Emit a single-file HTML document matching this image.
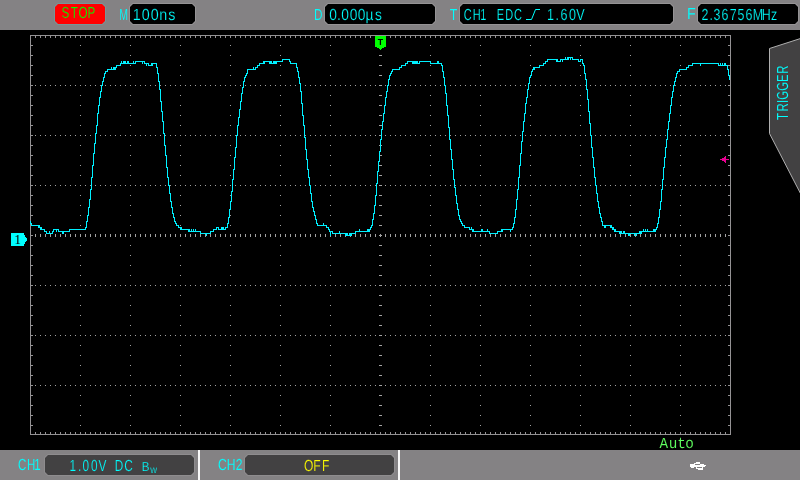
<!DOCTYPE html>
<html lang="en"><head><meta charset="utf-8"><title>Oscilloscope</title>
<style>html,body{margin:0;padding:0;background:#000;width:800px;height:480px;overflow:hidden}svg{display:block;position:absolute;left:0;top:0;will-change:transform}text{font-family:"Liberation Sans",sans-serif;white-space:pre;text-rendering:geometricPrecision}</style></head><body>
<svg width="800" height="480" viewBox="0 0 800 480">
<rect width="800" height="480" fill="#000"/>
<rect x="0" y="0" width="800" height="30" fill="#848284"/>
<rect x="0" y="450" width="800" height="30" fill="#848284"/>
<path fill="#ff0000" stroke="#7a9496" stroke-width="2" paint-order="stroke" d="M58 4H102L105 7V21L102 24H58L55 21V7z"/>
<path fill="#000" stroke="#959395" stroke-width="2" paint-order="stroke" d="M133 4H192L195 7V21L192 24H133L130 21V7z"/>
<path fill="#000" stroke="#959395" stroke-width="2" paint-order="stroke" d="M328 4H432L435 7V21L432 24H328L325 21V7z"/>
<path fill="#000" stroke="#959395" stroke-width="2" paint-order="stroke" d="M463 4H670L673 7V21L670 24H463L460 21V7z"/>
<path fill="#000" stroke="#959395" stroke-width="2" paint-order="stroke" d="M701 4H795L798 7V21L795 24H701L698 21V7z"/>
<path fill="#424142" stroke="#8e8c8e" stroke-width="2" paint-order="stroke" d="M48 455H191L194 458V472L191 475H48L45 472V458z"/>
<path fill="#424142" stroke="#8e8c8e" stroke-width="2" paint-order="stroke" d="M248 455H391L394 458V472L391 475H248L245 472V458z"/>
<rect x="198" y="450" width="2" height="30" fill="#f8f8f8"/><rect x="398" y="450" width="2" height="30" fill="#f8f8f8"/>
<g shape-rendering="crispEdges">
<path fill="#949294" d="M30 35h701v1h-701zM30 434h701v1h-701zM30 35h1v400h-1zM730 35h1v400h-1z"/>
<path fill="#949294" d="M35 36h1v2h-1zM35 432h1v2h-1zM40 36h1v2h-1zM40 432h1v2h-1zM45 36h1v2h-1zM45 432h1v2h-1zM50 36h1v2h-1zM50 432h1v2h-1zM55 36h1v2h-1zM55 432h1v2h-1zM60 36h1v2h-1zM60 432h1v2h-1zM65 36h1v2h-1zM65 432h1v2h-1zM70 36h1v2h-1zM70 432h1v2h-1zM75 36h1v2h-1zM75 432h1v2h-1zM80 36h1v2h-1zM80 432h1v2h-1zM85 36h1v2h-1zM85 432h1v2h-1zM90 36h1v2h-1zM90 432h1v2h-1zM95 36h1v2h-1zM95 432h1v2h-1zM100 36h1v2h-1zM100 432h1v2h-1zM105 36h1v2h-1zM105 432h1v2h-1zM110 36h1v2h-1zM110 432h1v2h-1zM115 36h1v2h-1zM115 432h1v2h-1zM120 36h1v2h-1zM120 432h1v2h-1zM125 36h1v2h-1zM125 432h1v2h-1zM130 36h1v2h-1zM130 432h1v2h-1zM135 36h1v2h-1zM135 432h1v2h-1zM140 36h1v2h-1zM140 432h1v2h-1zM145 36h1v2h-1zM145 432h1v2h-1zM150 36h1v2h-1zM150 432h1v2h-1zM155 36h1v2h-1zM155 432h1v2h-1zM160 36h1v2h-1zM160 432h1v2h-1zM165 36h1v2h-1zM165 432h1v2h-1zM170 36h1v2h-1zM170 432h1v2h-1zM175 36h1v2h-1zM175 432h1v2h-1zM180 36h1v2h-1zM180 432h1v2h-1zM185 36h1v2h-1zM185 432h1v2h-1zM190 36h1v2h-1zM190 432h1v2h-1zM195 36h1v2h-1zM195 432h1v2h-1zM200 36h1v2h-1zM200 432h1v2h-1zM205 36h1v2h-1zM205 432h1v2h-1zM210 36h1v2h-1zM210 432h1v2h-1zM215 36h1v2h-1zM215 432h1v2h-1zM220 36h1v2h-1zM220 432h1v2h-1zM225 36h1v2h-1zM225 432h1v2h-1zM230 36h1v2h-1zM230 432h1v2h-1zM235 36h1v2h-1zM235 432h1v2h-1zM240 36h1v2h-1zM240 432h1v2h-1zM245 36h1v2h-1zM245 432h1v2h-1zM250 36h1v2h-1zM250 432h1v2h-1zM255 36h1v2h-1zM255 432h1v2h-1zM260 36h1v2h-1zM260 432h1v2h-1zM265 36h1v2h-1zM265 432h1v2h-1zM270 36h1v2h-1zM270 432h1v2h-1zM275 36h1v2h-1zM275 432h1v2h-1zM280 36h1v2h-1zM280 432h1v2h-1zM285 36h1v2h-1zM285 432h1v2h-1zM290 36h1v2h-1zM290 432h1v2h-1zM295 36h1v2h-1zM295 432h1v2h-1zM300 36h1v2h-1zM300 432h1v2h-1zM305 36h1v2h-1zM305 432h1v2h-1zM310 36h1v2h-1zM310 432h1v2h-1zM315 36h1v2h-1zM315 432h1v2h-1zM320 36h1v2h-1zM320 432h1v2h-1zM325 36h1v2h-1zM325 432h1v2h-1zM330 36h1v2h-1zM330 432h1v2h-1zM335 36h1v2h-1zM335 432h1v2h-1zM340 36h1v2h-1zM340 432h1v2h-1zM345 36h1v2h-1zM345 432h1v2h-1zM350 36h1v2h-1zM350 432h1v2h-1zM355 36h1v2h-1zM355 432h1v2h-1zM360 36h1v2h-1zM360 432h1v2h-1zM365 36h1v2h-1zM365 432h1v2h-1zM370 36h1v2h-1zM370 432h1v2h-1zM375 36h1v2h-1zM375 432h1v2h-1zM380 36h1v2h-1zM380 432h1v2h-1zM385 36h1v2h-1zM385 432h1v2h-1zM390 36h1v2h-1zM390 432h1v2h-1zM395 36h1v2h-1zM395 432h1v2h-1zM400 36h1v2h-1zM400 432h1v2h-1zM405 36h1v2h-1zM405 432h1v2h-1zM410 36h1v2h-1zM410 432h1v2h-1zM415 36h1v2h-1zM415 432h1v2h-1zM420 36h1v2h-1zM420 432h1v2h-1zM425 36h1v2h-1zM425 432h1v2h-1zM430 36h1v2h-1zM430 432h1v2h-1zM435 36h1v2h-1zM435 432h1v2h-1zM440 36h1v2h-1zM440 432h1v2h-1zM445 36h1v2h-1zM445 432h1v2h-1zM450 36h1v2h-1zM450 432h1v2h-1zM455 36h1v2h-1zM455 432h1v2h-1zM460 36h1v2h-1zM460 432h1v2h-1zM465 36h1v2h-1zM465 432h1v2h-1zM470 36h1v2h-1zM470 432h1v2h-1zM475 36h1v2h-1zM475 432h1v2h-1zM480 36h1v2h-1zM480 432h1v2h-1zM485 36h1v2h-1zM485 432h1v2h-1zM490 36h1v2h-1zM490 432h1v2h-1zM495 36h1v2h-1zM495 432h1v2h-1zM500 36h1v2h-1zM500 432h1v2h-1zM505 36h1v2h-1zM505 432h1v2h-1zM510 36h1v2h-1zM510 432h1v2h-1zM515 36h1v2h-1zM515 432h1v2h-1zM520 36h1v2h-1zM520 432h1v2h-1zM525 36h1v2h-1zM525 432h1v2h-1zM530 36h1v2h-1zM530 432h1v2h-1zM535 36h1v2h-1zM535 432h1v2h-1zM540 36h1v2h-1zM540 432h1v2h-1zM545 36h1v2h-1zM545 432h1v2h-1zM550 36h1v2h-1zM550 432h1v2h-1zM555 36h1v2h-1zM555 432h1v2h-1zM560 36h1v2h-1zM560 432h1v2h-1zM565 36h1v2h-1zM565 432h1v2h-1zM570 36h1v2h-1zM570 432h1v2h-1zM575 36h1v2h-1zM575 432h1v2h-1zM580 36h1v2h-1zM580 432h1v2h-1zM585 36h1v2h-1zM585 432h1v2h-1zM590 36h1v2h-1zM590 432h1v2h-1zM595 36h1v2h-1zM595 432h1v2h-1zM600 36h1v2h-1zM600 432h1v2h-1zM605 36h1v2h-1zM605 432h1v2h-1zM610 36h1v2h-1zM610 432h1v2h-1zM615 36h1v2h-1zM615 432h1v2h-1zM620 36h1v2h-1zM620 432h1v2h-1zM625 36h1v2h-1zM625 432h1v2h-1zM630 36h1v2h-1zM630 432h1v2h-1zM635 36h1v2h-1zM635 432h1v2h-1zM640 36h1v2h-1zM640 432h1v2h-1zM645 36h1v2h-1zM645 432h1v2h-1zM650 36h1v2h-1zM650 432h1v2h-1zM655 36h1v2h-1zM655 432h1v2h-1zM660 36h1v2h-1zM660 432h1v2h-1zM665 36h1v2h-1zM665 432h1v2h-1zM670 36h1v2h-1zM670 432h1v2h-1zM675 36h1v2h-1zM675 432h1v2h-1zM680 36h1v2h-1zM680 432h1v2h-1zM685 36h1v2h-1zM685 432h1v2h-1zM690 36h1v2h-1zM690 432h1v2h-1zM695 36h1v2h-1zM695 432h1v2h-1zM700 36h1v2h-1zM700 432h1v2h-1zM705 36h1v2h-1zM705 432h1v2h-1zM710 36h1v2h-1zM710 432h1v2h-1zM715 36h1v2h-1zM715 432h1v2h-1zM720 36h1v2h-1zM720 432h1v2h-1zM725 36h1v2h-1zM725 432h1v2h-1zM31 45h2v1h-2zM728 45h2v1h-2zM31 55h2v1h-2zM728 55h2v1h-2zM31 65h2v1h-2zM728 65h2v1h-2zM31 75h2v1h-2zM728 75h2v1h-2zM31 85h2v1h-2zM728 85h2v1h-2zM31 95h2v1h-2zM728 95h2v1h-2zM31 105h2v1h-2zM728 105h2v1h-2zM31 115h2v1h-2zM728 115h2v1h-2zM31 125h2v1h-2zM728 125h2v1h-2zM31 135h2v1h-2zM728 135h2v1h-2zM31 145h2v1h-2zM728 145h2v1h-2zM31 155h2v1h-2zM728 155h2v1h-2zM31 165h2v1h-2zM728 165h2v1h-2zM31 175h2v1h-2zM728 175h2v1h-2zM31 185h2v1h-2zM728 185h2v1h-2zM31 195h2v1h-2zM728 195h2v1h-2zM31 205h2v1h-2zM728 205h2v1h-2zM31 215h2v1h-2zM728 215h2v1h-2zM31 225h2v1h-2zM728 225h2v1h-2zM31 235h2v1h-2zM728 235h2v1h-2zM31 245h2v1h-2zM728 245h2v1h-2zM31 255h2v1h-2zM728 255h2v1h-2zM31 265h2v1h-2zM728 265h2v1h-2zM31 275h2v1h-2zM728 275h2v1h-2zM31 285h2v1h-2zM728 285h2v1h-2zM31 295h2v1h-2zM728 295h2v1h-2zM31 305h2v1h-2zM728 305h2v1h-2zM31 315h2v1h-2zM728 315h2v1h-2zM31 325h2v1h-2zM728 325h2v1h-2zM31 335h2v1h-2zM728 335h2v1h-2zM31 345h2v1h-2zM728 345h2v1h-2zM31 355h2v1h-2zM728 355h2v1h-2zM31 365h2v1h-2zM728 365h2v1h-2zM31 375h2v1h-2zM728 375h2v1h-2zM31 385h2v1h-2zM728 385h2v1h-2zM31 395h2v1h-2zM728 395h2v1h-2zM31 405h2v1h-2zM728 405h2v1h-2zM31 415h2v1h-2zM728 415h2v1h-2zM31 425h2v1h-2zM728 425h2v1h-2z"/>
<path fill="#a0a0a0" d="M35 85h1v1h-1zM40 85h1v1h-1zM45 85h1v1h-1zM50 85h1v1h-1zM55 85h1v1h-1zM60 85h1v1h-1zM65 85h1v1h-1zM70 85h1v1h-1zM75 85h1v1h-1zM80 85h1v1h-1zM85 85h1v1h-1zM90 85h1v1h-1zM95 85h1v1h-1zM100 85h1v1h-1zM105 85h1v1h-1zM110 85h1v1h-1zM115 85h1v1h-1zM120 85h1v1h-1zM125 85h1v1h-1zM130 85h1v1h-1zM135 85h1v1h-1zM140 85h1v1h-1zM145 85h1v1h-1zM150 85h1v1h-1zM155 85h1v1h-1zM160 85h1v1h-1zM165 85h1v1h-1zM170 85h1v1h-1zM175 85h1v1h-1zM180 85h1v1h-1zM185 85h1v1h-1zM190 85h1v1h-1zM195 85h1v1h-1zM200 85h1v1h-1zM205 85h1v1h-1zM210 85h1v1h-1zM215 85h1v1h-1zM220 85h1v1h-1zM225 85h1v1h-1zM230 85h1v1h-1zM235 85h1v1h-1zM240 85h1v1h-1zM245 85h1v1h-1zM250 85h1v1h-1zM255 85h1v1h-1zM260 85h1v1h-1zM265 85h1v1h-1zM270 85h1v1h-1zM275 85h1v1h-1zM280 85h1v1h-1zM285 85h1v1h-1zM290 85h1v1h-1zM295 85h1v1h-1zM300 85h1v1h-1zM305 85h1v1h-1zM310 85h1v1h-1zM315 85h1v1h-1zM320 85h1v1h-1zM325 85h1v1h-1zM330 85h1v1h-1zM335 85h1v1h-1zM340 85h1v1h-1zM345 85h1v1h-1zM350 85h1v1h-1zM355 85h1v1h-1zM360 85h1v1h-1zM365 85h1v1h-1zM370 85h1v1h-1zM375 85h1v1h-1zM380 85h1v1h-1zM385 85h1v1h-1zM390 85h1v1h-1zM395 85h1v1h-1zM400 85h1v1h-1zM405 85h1v1h-1zM410 85h1v1h-1zM415 85h1v1h-1zM420 85h1v1h-1zM425 85h1v1h-1zM430 85h1v1h-1zM435 85h1v1h-1zM440 85h1v1h-1zM445 85h1v1h-1zM450 85h1v1h-1zM455 85h1v1h-1zM460 85h1v1h-1zM465 85h1v1h-1zM470 85h1v1h-1zM475 85h1v1h-1zM480 85h1v1h-1zM485 85h1v1h-1zM490 85h1v1h-1zM495 85h1v1h-1zM500 85h1v1h-1zM505 85h1v1h-1zM510 85h1v1h-1zM515 85h1v1h-1zM520 85h1v1h-1zM525 85h1v1h-1zM530 85h1v1h-1zM535 85h1v1h-1zM540 85h1v1h-1zM545 85h1v1h-1zM550 85h1v1h-1zM555 85h1v1h-1zM560 85h1v1h-1zM565 85h1v1h-1zM570 85h1v1h-1zM575 85h1v1h-1zM580 85h1v1h-1zM585 85h1v1h-1zM590 85h1v1h-1zM595 85h1v1h-1zM600 85h1v1h-1zM605 85h1v1h-1zM610 85h1v1h-1zM615 85h1v1h-1zM620 85h1v1h-1zM625 85h1v1h-1zM630 85h1v1h-1zM635 85h1v1h-1zM640 85h1v1h-1zM645 85h1v1h-1zM650 85h1v1h-1zM655 85h1v1h-1zM660 85h1v1h-1zM665 85h1v1h-1zM670 85h1v1h-1zM675 85h1v1h-1zM680 85h1v1h-1zM685 85h1v1h-1zM690 85h1v1h-1zM695 85h1v1h-1zM700 85h1v1h-1zM705 85h1v1h-1zM710 85h1v1h-1zM715 85h1v1h-1zM720 85h1v1h-1zM725 85h1v1h-1zM35 135h1v1h-1zM40 135h1v1h-1zM45 135h1v1h-1zM50 135h1v1h-1zM55 135h1v1h-1zM60 135h1v1h-1zM65 135h1v1h-1zM70 135h1v1h-1zM75 135h1v1h-1zM80 135h1v1h-1zM85 135h1v1h-1zM90 135h1v1h-1zM95 135h1v1h-1zM100 135h1v1h-1zM105 135h1v1h-1zM110 135h1v1h-1zM115 135h1v1h-1zM120 135h1v1h-1zM125 135h1v1h-1zM130 135h1v1h-1zM135 135h1v1h-1zM140 135h1v1h-1zM145 135h1v1h-1zM150 135h1v1h-1zM155 135h1v1h-1zM160 135h1v1h-1zM165 135h1v1h-1zM170 135h1v1h-1zM175 135h1v1h-1zM180 135h1v1h-1zM185 135h1v1h-1zM190 135h1v1h-1zM195 135h1v1h-1zM200 135h1v1h-1zM205 135h1v1h-1zM210 135h1v1h-1zM215 135h1v1h-1zM220 135h1v1h-1zM225 135h1v1h-1zM230 135h1v1h-1zM235 135h1v1h-1zM240 135h1v1h-1zM245 135h1v1h-1zM250 135h1v1h-1zM255 135h1v1h-1zM260 135h1v1h-1zM265 135h1v1h-1zM270 135h1v1h-1zM275 135h1v1h-1zM280 135h1v1h-1zM285 135h1v1h-1zM290 135h1v1h-1zM295 135h1v1h-1zM300 135h1v1h-1zM305 135h1v1h-1zM310 135h1v1h-1zM315 135h1v1h-1zM320 135h1v1h-1zM325 135h1v1h-1zM330 135h1v1h-1zM335 135h1v1h-1zM340 135h1v1h-1zM345 135h1v1h-1zM350 135h1v1h-1zM355 135h1v1h-1zM360 135h1v1h-1zM365 135h1v1h-1zM370 135h1v1h-1zM375 135h1v1h-1zM380 135h1v1h-1zM385 135h1v1h-1zM390 135h1v1h-1zM395 135h1v1h-1zM400 135h1v1h-1zM405 135h1v1h-1zM410 135h1v1h-1zM415 135h1v1h-1zM420 135h1v1h-1zM425 135h1v1h-1zM430 135h1v1h-1zM435 135h1v1h-1zM440 135h1v1h-1zM445 135h1v1h-1zM450 135h1v1h-1zM455 135h1v1h-1zM460 135h1v1h-1zM465 135h1v1h-1zM470 135h1v1h-1zM475 135h1v1h-1zM480 135h1v1h-1zM485 135h1v1h-1zM490 135h1v1h-1zM495 135h1v1h-1zM500 135h1v1h-1zM505 135h1v1h-1zM510 135h1v1h-1zM515 135h1v1h-1zM520 135h1v1h-1zM525 135h1v1h-1zM530 135h1v1h-1zM535 135h1v1h-1zM540 135h1v1h-1zM545 135h1v1h-1zM550 135h1v1h-1zM555 135h1v1h-1zM560 135h1v1h-1zM565 135h1v1h-1zM570 135h1v1h-1zM575 135h1v1h-1zM580 135h1v1h-1zM585 135h1v1h-1zM590 135h1v1h-1zM595 135h1v1h-1zM600 135h1v1h-1zM605 135h1v1h-1zM610 135h1v1h-1zM615 135h1v1h-1zM620 135h1v1h-1zM625 135h1v1h-1zM630 135h1v1h-1zM635 135h1v1h-1zM640 135h1v1h-1zM645 135h1v1h-1zM650 135h1v1h-1zM655 135h1v1h-1zM660 135h1v1h-1zM665 135h1v1h-1zM670 135h1v1h-1zM675 135h1v1h-1zM680 135h1v1h-1zM685 135h1v1h-1zM690 135h1v1h-1zM695 135h1v1h-1zM700 135h1v1h-1zM705 135h1v1h-1zM710 135h1v1h-1zM715 135h1v1h-1zM720 135h1v1h-1zM725 135h1v1h-1zM35 185h1v1h-1zM40 185h1v1h-1zM45 185h1v1h-1zM50 185h1v1h-1zM55 185h1v1h-1zM60 185h1v1h-1zM65 185h1v1h-1zM70 185h1v1h-1zM75 185h1v1h-1zM80 185h1v1h-1zM85 185h1v1h-1zM90 185h1v1h-1zM95 185h1v1h-1zM100 185h1v1h-1zM105 185h1v1h-1zM110 185h1v1h-1zM115 185h1v1h-1zM120 185h1v1h-1zM125 185h1v1h-1zM130 185h1v1h-1zM135 185h1v1h-1zM140 185h1v1h-1zM145 185h1v1h-1zM150 185h1v1h-1zM155 185h1v1h-1zM160 185h1v1h-1zM165 185h1v1h-1zM170 185h1v1h-1zM175 185h1v1h-1zM180 185h1v1h-1zM185 185h1v1h-1zM190 185h1v1h-1zM195 185h1v1h-1zM200 185h1v1h-1zM205 185h1v1h-1zM210 185h1v1h-1zM215 185h1v1h-1zM220 185h1v1h-1zM225 185h1v1h-1zM230 185h1v1h-1zM235 185h1v1h-1zM240 185h1v1h-1zM245 185h1v1h-1zM250 185h1v1h-1zM255 185h1v1h-1zM260 185h1v1h-1zM265 185h1v1h-1zM270 185h1v1h-1zM275 185h1v1h-1zM280 185h1v1h-1zM285 185h1v1h-1zM290 185h1v1h-1zM295 185h1v1h-1zM300 185h1v1h-1zM305 185h1v1h-1zM310 185h1v1h-1zM315 185h1v1h-1zM320 185h1v1h-1zM325 185h1v1h-1zM330 185h1v1h-1zM335 185h1v1h-1zM340 185h1v1h-1zM345 185h1v1h-1zM350 185h1v1h-1zM355 185h1v1h-1zM360 185h1v1h-1zM365 185h1v1h-1zM370 185h1v1h-1zM375 185h1v1h-1zM380 185h1v1h-1zM385 185h1v1h-1zM390 185h1v1h-1zM395 185h1v1h-1zM400 185h1v1h-1zM405 185h1v1h-1zM410 185h1v1h-1zM415 185h1v1h-1zM420 185h1v1h-1zM425 185h1v1h-1zM430 185h1v1h-1zM435 185h1v1h-1zM440 185h1v1h-1zM445 185h1v1h-1zM450 185h1v1h-1zM455 185h1v1h-1zM460 185h1v1h-1zM465 185h1v1h-1zM470 185h1v1h-1zM475 185h1v1h-1zM480 185h1v1h-1zM485 185h1v1h-1zM490 185h1v1h-1zM495 185h1v1h-1zM500 185h1v1h-1zM505 185h1v1h-1zM510 185h1v1h-1zM515 185h1v1h-1zM520 185h1v1h-1zM525 185h1v1h-1zM530 185h1v1h-1zM535 185h1v1h-1zM540 185h1v1h-1zM545 185h1v1h-1zM550 185h1v1h-1zM555 185h1v1h-1zM560 185h1v1h-1zM565 185h1v1h-1zM570 185h1v1h-1zM575 185h1v1h-1zM580 185h1v1h-1zM585 185h1v1h-1zM590 185h1v1h-1zM595 185h1v1h-1zM600 185h1v1h-1zM605 185h1v1h-1zM610 185h1v1h-1zM615 185h1v1h-1zM620 185h1v1h-1zM625 185h1v1h-1zM630 185h1v1h-1zM635 185h1v1h-1zM640 185h1v1h-1zM645 185h1v1h-1zM650 185h1v1h-1zM655 185h1v1h-1zM660 185h1v1h-1zM665 185h1v1h-1zM670 185h1v1h-1zM675 185h1v1h-1zM680 185h1v1h-1zM685 185h1v1h-1zM690 185h1v1h-1zM695 185h1v1h-1zM700 185h1v1h-1zM705 185h1v1h-1zM710 185h1v1h-1zM715 185h1v1h-1zM720 185h1v1h-1zM725 185h1v1h-1zM35 285h1v1h-1zM40 285h1v1h-1zM45 285h1v1h-1zM50 285h1v1h-1zM55 285h1v1h-1zM60 285h1v1h-1zM65 285h1v1h-1zM70 285h1v1h-1zM75 285h1v1h-1zM80 285h1v1h-1zM85 285h1v1h-1zM90 285h1v1h-1zM95 285h1v1h-1zM100 285h1v1h-1zM105 285h1v1h-1zM110 285h1v1h-1zM115 285h1v1h-1zM120 285h1v1h-1zM125 285h1v1h-1zM130 285h1v1h-1zM135 285h1v1h-1zM140 285h1v1h-1zM145 285h1v1h-1zM150 285h1v1h-1zM155 285h1v1h-1zM160 285h1v1h-1zM165 285h1v1h-1zM170 285h1v1h-1zM175 285h1v1h-1zM180 285h1v1h-1zM185 285h1v1h-1zM190 285h1v1h-1zM195 285h1v1h-1zM200 285h1v1h-1zM205 285h1v1h-1zM210 285h1v1h-1zM215 285h1v1h-1zM220 285h1v1h-1zM225 285h1v1h-1zM230 285h1v1h-1zM235 285h1v1h-1zM240 285h1v1h-1zM245 285h1v1h-1zM250 285h1v1h-1zM255 285h1v1h-1zM260 285h1v1h-1zM265 285h1v1h-1zM270 285h1v1h-1zM275 285h1v1h-1zM280 285h1v1h-1zM285 285h1v1h-1zM290 285h1v1h-1zM295 285h1v1h-1zM300 285h1v1h-1zM305 285h1v1h-1zM310 285h1v1h-1zM315 285h1v1h-1zM320 285h1v1h-1zM325 285h1v1h-1zM330 285h1v1h-1zM335 285h1v1h-1zM340 285h1v1h-1zM345 285h1v1h-1zM350 285h1v1h-1zM355 285h1v1h-1zM360 285h1v1h-1zM365 285h1v1h-1zM370 285h1v1h-1zM375 285h1v1h-1zM380 285h1v1h-1zM385 285h1v1h-1zM390 285h1v1h-1zM395 285h1v1h-1zM400 285h1v1h-1zM405 285h1v1h-1zM410 285h1v1h-1zM415 285h1v1h-1zM420 285h1v1h-1zM425 285h1v1h-1zM430 285h1v1h-1zM435 285h1v1h-1zM440 285h1v1h-1zM445 285h1v1h-1zM450 285h1v1h-1zM455 285h1v1h-1zM460 285h1v1h-1zM465 285h1v1h-1zM470 285h1v1h-1zM475 285h1v1h-1zM480 285h1v1h-1zM485 285h1v1h-1zM490 285h1v1h-1zM495 285h1v1h-1zM500 285h1v1h-1zM505 285h1v1h-1zM510 285h1v1h-1zM515 285h1v1h-1zM520 285h1v1h-1zM525 285h1v1h-1zM530 285h1v1h-1zM535 285h1v1h-1zM540 285h1v1h-1zM545 285h1v1h-1zM550 285h1v1h-1zM555 285h1v1h-1zM560 285h1v1h-1zM565 285h1v1h-1zM570 285h1v1h-1zM575 285h1v1h-1zM580 285h1v1h-1zM585 285h1v1h-1zM590 285h1v1h-1zM595 285h1v1h-1zM600 285h1v1h-1zM605 285h1v1h-1zM610 285h1v1h-1zM615 285h1v1h-1zM620 285h1v1h-1zM625 285h1v1h-1zM630 285h1v1h-1zM635 285h1v1h-1zM640 285h1v1h-1zM645 285h1v1h-1zM650 285h1v1h-1zM655 285h1v1h-1zM660 285h1v1h-1zM665 285h1v1h-1zM670 285h1v1h-1zM675 285h1v1h-1zM680 285h1v1h-1zM685 285h1v1h-1zM690 285h1v1h-1zM695 285h1v1h-1zM700 285h1v1h-1zM705 285h1v1h-1zM710 285h1v1h-1zM715 285h1v1h-1zM720 285h1v1h-1zM725 285h1v1h-1zM35 335h1v1h-1zM40 335h1v1h-1zM45 335h1v1h-1zM50 335h1v1h-1zM55 335h1v1h-1zM60 335h1v1h-1zM65 335h1v1h-1zM70 335h1v1h-1zM75 335h1v1h-1zM80 335h1v1h-1zM85 335h1v1h-1zM90 335h1v1h-1zM95 335h1v1h-1zM100 335h1v1h-1zM105 335h1v1h-1zM110 335h1v1h-1zM115 335h1v1h-1zM120 335h1v1h-1zM125 335h1v1h-1zM130 335h1v1h-1zM135 335h1v1h-1zM140 335h1v1h-1zM145 335h1v1h-1zM150 335h1v1h-1zM155 335h1v1h-1zM160 335h1v1h-1zM165 335h1v1h-1zM170 335h1v1h-1zM175 335h1v1h-1zM180 335h1v1h-1zM185 335h1v1h-1zM190 335h1v1h-1zM195 335h1v1h-1zM200 335h1v1h-1zM205 335h1v1h-1zM210 335h1v1h-1zM215 335h1v1h-1zM220 335h1v1h-1zM225 335h1v1h-1zM230 335h1v1h-1zM235 335h1v1h-1zM240 335h1v1h-1zM245 335h1v1h-1zM250 335h1v1h-1zM255 335h1v1h-1zM260 335h1v1h-1zM265 335h1v1h-1zM270 335h1v1h-1zM275 335h1v1h-1zM280 335h1v1h-1zM285 335h1v1h-1zM290 335h1v1h-1zM295 335h1v1h-1zM300 335h1v1h-1zM305 335h1v1h-1zM310 335h1v1h-1zM315 335h1v1h-1zM320 335h1v1h-1zM325 335h1v1h-1zM330 335h1v1h-1zM335 335h1v1h-1zM340 335h1v1h-1zM345 335h1v1h-1zM350 335h1v1h-1zM355 335h1v1h-1zM360 335h1v1h-1zM365 335h1v1h-1zM370 335h1v1h-1zM375 335h1v1h-1zM380 335h1v1h-1zM385 335h1v1h-1zM390 335h1v1h-1zM395 335h1v1h-1zM400 335h1v1h-1zM405 335h1v1h-1zM410 335h1v1h-1zM415 335h1v1h-1zM420 335h1v1h-1zM425 335h1v1h-1zM430 335h1v1h-1zM435 335h1v1h-1zM440 335h1v1h-1zM445 335h1v1h-1zM450 335h1v1h-1zM455 335h1v1h-1zM460 335h1v1h-1zM465 335h1v1h-1zM470 335h1v1h-1zM475 335h1v1h-1zM480 335h1v1h-1zM485 335h1v1h-1zM490 335h1v1h-1zM495 335h1v1h-1zM500 335h1v1h-1zM505 335h1v1h-1zM510 335h1v1h-1zM515 335h1v1h-1zM520 335h1v1h-1zM525 335h1v1h-1zM530 335h1v1h-1zM535 335h1v1h-1zM540 335h1v1h-1zM545 335h1v1h-1zM550 335h1v1h-1zM555 335h1v1h-1zM560 335h1v1h-1zM565 335h1v1h-1zM570 335h1v1h-1zM575 335h1v1h-1zM580 335h1v1h-1zM585 335h1v1h-1zM590 335h1v1h-1zM595 335h1v1h-1zM600 335h1v1h-1zM605 335h1v1h-1zM610 335h1v1h-1zM615 335h1v1h-1zM620 335h1v1h-1zM625 335h1v1h-1zM630 335h1v1h-1zM635 335h1v1h-1zM640 335h1v1h-1zM645 335h1v1h-1zM650 335h1v1h-1zM655 335h1v1h-1zM660 335h1v1h-1zM665 335h1v1h-1zM670 335h1v1h-1zM675 335h1v1h-1zM680 335h1v1h-1zM685 335h1v1h-1zM690 335h1v1h-1zM695 335h1v1h-1zM700 335h1v1h-1zM705 335h1v1h-1zM710 335h1v1h-1zM715 335h1v1h-1zM720 335h1v1h-1zM725 335h1v1h-1zM35 385h1v1h-1zM40 385h1v1h-1zM45 385h1v1h-1zM50 385h1v1h-1zM55 385h1v1h-1zM60 385h1v1h-1zM65 385h1v1h-1zM70 385h1v1h-1zM75 385h1v1h-1zM80 385h1v1h-1zM85 385h1v1h-1zM90 385h1v1h-1zM95 385h1v1h-1zM100 385h1v1h-1zM105 385h1v1h-1zM110 385h1v1h-1zM115 385h1v1h-1zM120 385h1v1h-1zM125 385h1v1h-1zM130 385h1v1h-1zM135 385h1v1h-1zM140 385h1v1h-1zM145 385h1v1h-1zM150 385h1v1h-1zM155 385h1v1h-1zM160 385h1v1h-1zM165 385h1v1h-1zM170 385h1v1h-1zM175 385h1v1h-1zM180 385h1v1h-1zM185 385h1v1h-1zM190 385h1v1h-1zM195 385h1v1h-1zM200 385h1v1h-1zM205 385h1v1h-1zM210 385h1v1h-1zM215 385h1v1h-1zM220 385h1v1h-1zM225 385h1v1h-1zM230 385h1v1h-1zM235 385h1v1h-1zM240 385h1v1h-1zM245 385h1v1h-1zM250 385h1v1h-1zM255 385h1v1h-1zM260 385h1v1h-1zM265 385h1v1h-1zM270 385h1v1h-1zM275 385h1v1h-1zM280 385h1v1h-1zM285 385h1v1h-1zM290 385h1v1h-1zM295 385h1v1h-1zM300 385h1v1h-1zM305 385h1v1h-1zM310 385h1v1h-1zM315 385h1v1h-1zM320 385h1v1h-1zM325 385h1v1h-1zM330 385h1v1h-1zM335 385h1v1h-1zM340 385h1v1h-1zM345 385h1v1h-1zM350 385h1v1h-1zM355 385h1v1h-1zM360 385h1v1h-1zM365 385h1v1h-1zM370 385h1v1h-1zM375 385h1v1h-1zM380 385h1v1h-1zM385 385h1v1h-1zM390 385h1v1h-1zM395 385h1v1h-1zM400 385h1v1h-1zM405 385h1v1h-1zM410 385h1v1h-1zM415 385h1v1h-1zM420 385h1v1h-1zM425 385h1v1h-1zM430 385h1v1h-1zM435 385h1v1h-1zM440 385h1v1h-1zM445 385h1v1h-1zM450 385h1v1h-1zM455 385h1v1h-1zM460 385h1v1h-1zM465 385h1v1h-1zM470 385h1v1h-1zM475 385h1v1h-1zM480 385h1v1h-1zM485 385h1v1h-1zM490 385h1v1h-1zM495 385h1v1h-1zM500 385h1v1h-1zM505 385h1v1h-1zM510 385h1v1h-1zM515 385h1v1h-1zM520 385h1v1h-1zM525 385h1v1h-1zM530 385h1v1h-1zM535 385h1v1h-1zM540 385h1v1h-1zM545 385h1v1h-1zM550 385h1v1h-1zM555 385h1v1h-1zM560 385h1v1h-1zM565 385h1v1h-1zM570 385h1v1h-1zM575 385h1v1h-1zM580 385h1v1h-1zM585 385h1v1h-1zM590 385h1v1h-1zM595 385h1v1h-1zM600 385h1v1h-1zM605 385h1v1h-1zM610 385h1v1h-1zM615 385h1v1h-1zM620 385h1v1h-1zM625 385h1v1h-1zM630 385h1v1h-1zM635 385h1v1h-1zM640 385h1v1h-1zM645 385h1v1h-1zM650 385h1v1h-1zM655 385h1v1h-1zM660 385h1v1h-1zM665 385h1v1h-1zM670 385h1v1h-1zM675 385h1v1h-1zM680 385h1v1h-1zM685 385h1v1h-1zM690 385h1v1h-1zM695 385h1v1h-1zM700 385h1v1h-1zM705 385h1v1h-1zM710 385h1v1h-1zM715 385h1v1h-1zM720 385h1v1h-1zM725 385h1v1h-1zM80 45h1v1h-1zM80 55h1v1h-1zM80 65h1v1h-1zM80 75h1v1h-1zM80 95h1v1h-1zM80 105h1v1h-1zM80 115h1v1h-1zM80 125h1v1h-1zM80 145h1v1h-1zM80 155h1v1h-1zM80 165h1v1h-1zM80 175h1v1h-1zM80 195h1v1h-1zM80 205h1v1h-1zM80 215h1v1h-1zM80 225h1v1h-1zM80 245h1v1h-1zM80 255h1v1h-1zM80 265h1v1h-1zM80 275h1v1h-1zM80 295h1v1h-1zM80 305h1v1h-1zM80 315h1v1h-1zM80 325h1v1h-1zM80 345h1v1h-1zM80 355h1v1h-1zM80 365h1v1h-1zM80 375h1v1h-1zM80 395h1v1h-1zM80 405h1v1h-1zM80 415h1v1h-1zM80 425h1v1h-1zM130 45h1v1h-1zM130 55h1v1h-1zM130 65h1v1h-1zM130 75h1v1h-1zM130 95h1v1h-1zM130 105h1v1h-1zM130 115h1v1h-1zM130 125h1v1h-1zM130 145h1v1h-1zM130 155h1v1h-1zM130 165h1v1h-1zM130 175h1v1h-1zM130 195h1v1h-1zM130 205h1v1h-1zM130 215h1v1h-1zM130 225h1v1h-1zM130 245h1v1h-1zM130 255h1v1h-1zM130 265h1v1h-1zM130 275h1v1h-1zM130 295h1v1h-1zM130 305h1v1h-1zM130 315h1v1h-1zM130 325h1v1h-1zM130 345h1v1h-1zM130 355h1v1h-1zM130 365h1v1h-1zM130 375h1v1h-1zM130 395h1v1h-1zM130 405h1v1h-1zM130 415h1v1h-1zM130 425h1v1h-1zM180 45h1v1h-1zM180 55h1v1h-1zM180 65h1v1h-1zM180 75h1v1h-1zM180 95h1v1h-1zM180 105h1v1h-1zM180 115h1v1h-1zM180 125h1v1h-1zM180 145h1v1h-1zM180 155h1v1h-1zM180 165h1v1h-1zM180 175h1v1h-1zM180 195h1v1h-1zM180 205h1v1h-1zM180 215h1v1h-1zM180 225h1v1h-1zM180 245h1v1h-1zM180 255h1v1h-1zM180 265h1v1h-1zM180 275h1v1h-1zM180 295h1v1h-1zM180 305h1v1h-1zM180 315h1v1h-1zM180 325h1v1h-1zM180 345h1v1h-1zM180 355h1v1h-1zM180 365h1v1h-1zM180 375h1v1h-1zM180 395h1v1h-1zM180 405h1v1h-1zM180 415h1v1h-1zM180 425h1v1h-1zM230 45h1v1h-1zM230 55h1v1h-1zM230 65h1v1h-1zM230 75h1v1h-1zM230 95h1v1h-1zM230 105h1v1h-1zM230 115h1v1h-1zM230 125h1v1h-1zM230 145h1v1h-1zM230 155h1v1h-1zM230 165h1v1h-1zM230 175h1v1h-1zM230 195h1v1h-1zM230 205h1v1h-1zM230 215h1v1h-1zM230 225h1v1h-1zM230 245h1v1h-1zM230 255h1v1h-1zM230 265h1v1h-1zM230 275h1v1h-1zM230 295h1v1h-1zM230 305h1v1h-1zM230 315h1v1h-1zM230 325h1v1h-1zM230 345h1v1h-1zM230 355h1v1h-1zM230 365h1v1h-1zM230 375h1v1h-1zM230 395h1v1h-1zM230 405h1v1h-1zM230 415h1v1h-1zM230 425h1v1h-1zM280 45h1v1h-1zM280 55h1v1h-1zM280 65h1v1h-1zM280 75h1v1h-1zM280 95h1v1h-1zM280 105h1v1h-1zM280 115h1v1h-1zM280 125h1v1h-1zM280 145h1v1h-1zM280 155h1v1h-1zM280 165h1v1h-1zM280 175h1v1h-1zM280 195h1v1h-1zM280 205h1v1h-1zM280 215h1v1h-1zM280 225h1v1h-1zM280 245h1v1h-1zM280 255h1v1h-1zM280 265h1v1h-1zM280 275h1v1h-1zM280 295h1v1h-1zM280 305h1v1h-1zM280 315h1v1h-1zM280 325h1v1h-1zM280 345h1v1h-1zM280 355h1v1h-1zM280 365h1v1h-1zM280 375h1v1h-1zM280 395h1v1h-1zM280 405h1v1h-1zM280 415h1v1h-1zM280 425h1v1h-1zM330 45h1v1h-1zM330 55h1v1h-1zM330 65h1v1h-1zM330 75h1v1h-1zM330 95h1v1h-1zM330 105h1v1h-1zM330 115h1v1h-1zM330 125h1v1h-1zM330 145h1v1h-1zM330 155h1v1h-1zM330 165h1v1h-1zM330 175h1v1h-1zM330 195h1v1h-1zM330 205h1v1h-1zM330 215h1v1h-1zM330 225h1v1h-1zM330 245h1v1h-1zM330 255h1v1h-1zM330 265h1v1h-1zM330 275h1v1h-1zM330 295h1v1h-1zM330 305h1v1h-1zM330 315h1v1h-1zM330 325h1v1h-1zM330 345h1v1h-1zM330 355h1v1h-1zM330 365h1v1h-1zM330 375h1v1h-1zM330 395h1v1h-1zM330 405h1v1h-1zM330 415h1v1h-1zM330 425h1v1h-1zM430 45h1v1h-1zM430 55h1v1h-1zM430 65h1v1h-1zM430 75h1v1h-1zM430 95h1v1h-1zM430 105h1v1h-1zM430 115h1v1h-1zM430 125h1v1h-1zM430 145h1v1h-1zM430 155h1v1h-1zM430 165h1v1h-1zM430 175h1v1h-1zM430 195h1v1h-1zM430 205h1v1h-1zM430 215h1v1h-1zM430 225h1v1h-1zM430 245h1v1h-1zM430 255h1v1h-1zM430 265h1v1h-1zM430 275h1v1h-1zM430 295h1v1h-1zM430 305h1v1h-1zM430 315h1v1h-1zM430 325h1v1h-1zM430 345h1v1h-1zM430 355h1v1h-1zM430 365h1v1h-1zM430 375h1v1h-1zM430 395h1v1h-1zM430 405h1v1h-1zM430 415h1v1h-1zM430 425h1v1h-1zM480 45h1v1h-1zM480 55h1v1h-1zM480 65h1v1h-1zM480 75h1v1h-1zM480 95h1v1h-1zM480 105h1v1h-1zM480 115h1v1h-1zM480 125h1v1h-1zM480 145h1v1h-1zM480 155h1v1h-1zM480 165h1v1h-1zM480 175h1v1h-1zM480 195h1v1h-1zM480 205h1v1h-1zM480 215h1v1h-1zM480 225h1v1h-1zM480 245h1v1h-1zM480 255h1v1h-1zM480 265h1v1h-1zM480 275h1v1h-1zM480 295h1v1h-1zM480 305h1v1h-1zM480 315h1v1h-1zM480 325h1v1h-1zM480 345h1v1h-1zM480 355h1v1h-1zM480 365h1v1h-1zM480 375h1v1h-1zM480 395h1v1h-1zM480 405h1v1h-1zM480 415h1v1h-1zM480 425h1v1h-1zM530 45h1v1h-1zM530 55h1v1h-1zM530 65h1v1h-1zM530 75h1v1h-1zM530 95h1v1h-1zM530 105h1v1h-1zM530 115h1v1h-1zM530 125h1v1h-1zM530 145h1v1h-1zM530 155h1v1h-1zM530 165h1v1h-1zM530 175h1v1h-1zM530 195h1v1h-1zM530 205h1v1h-1zM530 215h1v1h-1zM530 225h1v1h-1zM530 245h1v1h-1zM530 255h1v1h-1zM530 265h1v1h-1zM530 275h1v1h-1zM530 295h1v1h-1zM530 305h1v1h-1zM530 315h1v1h-1zM530 325h1v1h-1zM530 345h1v1h-1zM530 355h1v1h-1zM530 365h1v1h-1zM530 375h1v1h-1zM530 395h1v1h-1zM530 405h1v1h-1zM530 415h1v1h-1zM530 425h1v1h-1zM580 45h1v1h-1zM580 55h1v1h-1zM580 65h1v1h-1zM580 75h1v1h-1zM580 95h1v1h-1zM580 105h1v1h-1zM580 115h1v1h-1zM580 125h1v1h-1zM580 145h1v1h-1zM580 155h1v1h-1zM580 165h1v1h-1zM580 175h1v1h-1zM580 195h1v1h-1zM580 205h1v1h-1zM580 215h1v1h-1zM580 225h1v1h-1zM580 245h1v1h-1zM580 255h1v1h-1zM580 265h1v1h-1zM580 275h1v1h-1zM580 295h1v1h-1zM580 305h1v1h-1zM580 315h1v1h-1zM580 325h1v1h-1zM580 345h1v1h-1zM580 355h1v1h-1zM580 365h1v1h-1zM580 375h1v1h-1zM580 395h1v1h-1zM580 405h1v1h-1zM580 415h1v1h-1zM580 425h1v1h-1zM630 45h1v1h-1zM630 55h1v1h-1zM630 65h1v1h-1zM630 75h1v1h-1zM630 95h1v1h-1zM630 105h1v1h-1zM630 115h1v1h-1zM630 125h1v1h-1zM630 145h1v1h-1zM630 155h1v1h-1zM630 165h1v1h-1zM630 175h1v1h-1zM630 195h1v1h-1zM630 205h1v1h-1zM630 215h1v1h-1zM630 225h1v1h-1zM630 245h1v1h-1zM630 255h1v1h-1zM630 265h1v1h-1zM630 275h1v1h-1zM630 295h1v1h-1zM630 305h1v1h-1zM630 315h1v1h-1zM630 325h1v1h-1zM630 345h1v1h-1zM630 355h1v1h-1zM630 365h1v1h-1zM630 375h1v1h-1zM630 395h1v1h-1zM630 405h1v1h-1zM630 415h1v1h-1zM630 425h1v1h-1zM680 45h1v1h-1zM680 55h1v1h-1zM680 65h1v1h-1zM680 75h1v1h-1zM680 95h1v1h-1zM680 105h1v1h-1zM680 115h1v1h-1zM680 125h1v1h-1zM680 145h1v1h-1zM680 155h1v1h-1zM680 165h1v1h-1zM680 175h1v1h-1zM680 195h1v1h-1zM680 205h1v1h-1zM680 215h1v1h-1zM680 225h1v1h-1zM680 245h1v1h-1zM680 255h1v1h-1zM680 265h1v1h-1zM680 275h1v1h-1zM680 295h1v1h-1zM680 305h1v1h-1zM680 315h1v1h-1zM680 325h1v1h-1zM680 345h1v1h-1zM680 355h1v1h-1zM680 365h1v1h-1zM680 375h1v1h-1zM680 395h1v1h-1zM680 405h1v1h-1zM680 415h1v1h-1zM680 425h1v1h-1z"/>
<path fill="#a4a4a4" d="M35 234h1v3h-1zM40 234h1v3h-1zM45 234h1v3h-1zM50 234h1v3h-1zM55 234h1v3h-1zM60 234h1v3h-1zM65 234h1v3h-1zM70 234h1v3h-1zM75 234h1v3h-1zM80 234h1v3h-1zM85 234h1v3h-1zM90 234h1v3h-1zM95 234h1v3h-1zM100 234h1v3h-1zM105 234h1v3h-1zM110 234h1v3h-1zM115 234h1v3h-1zM120 234h1v3h-1zM125 234h1v3h-1zM130 234h1v3h-1zM135 234h1v3h-1zM140 234h1v3h-1zM145 234h1v3h-1zM150 234h1v3h-1zM155 234h1v3h-1zM160 234h1v3h-1zM165 234h1v3h-1zM170 234h1v3h-1zM175 234h1v3h-1zM180 234h1v3h-1zM185 234h1v3h-1zM190 234h1v3h-1zM195 234h1v3h-1zM200 234h1v3h-1zM205 234h1v3h-1zM210 234h1v3h-1zM215 234h1v3h-1zM220 234h1v3h-1zM225 234h1v3h-1zM230 234h1v3h-1zM235 234h1v3h-1zM240 234h1v3h-1zM245 234h1v3h-1zM250 234h1v3h-1zM255 234h1v3h-1zM260 234h1v3h-1zM265 234h1v3h-1zM270 234h1v3h-1zM275 234h1v3h-1zM280 234h1v3h-1zM285 234h1v3h-1zM290 234h1v3h-1zM295 234h1v3h-1zM300 234h1v3h-1zM305 234h1v3h-1zM310 234h1v3h-1zM315 234h1v3h-1zM320 234h1v3h-1zM325 234h1v3h-1zM330 234h1v3h-1zM335 234h1v3h-1zM340 234h1v3h-1zM345 234h1v3h-1zM350 234h1v3h-1zM355 234h1v3h-1zM360 234h1v3h-1zM365 234h1v3h-1zM370 234h1v3h-1zM375 234h1v3h-1zM380 234h1v3h-1zM385 234h1v3h-1zM390 234h1v3h-1zM395 234h1v3h-1zM400 234h1v3h-1zM405 234h1v3h-1zM410 234h1v3h-1zM415 234h1v3h-1zM420 234h1v3h-1zM425 234h1v3h-1zM430 234h1v3h-1zM435 234h1v3h-1zM440 234h1v3h-1zM445 234h1v3h-1zM450 234h1v3h-1zM455 234h1v3h-1zM460 234h1v3h-1zM465 234h1v3h-1zM470 234h1v3h-1zM475 234h1v3h-1zM480 234h1v3h-1zM485 234h1v3h-1zM490 234h1v3h-1zM495 234h1v3h-1zM500 234h1v3h-1zM505 234h1v3h-1zM510 234h1v3h-1zM515 234h1v3h-1zM520 234h1v3h-1zM525 234h1v3h-1zM530 234h1v3h-1zM535 234h1v3h-1zM540 234h1v3h-1zM545 234h1v3h-1zM550 234h1v3h-1zM555 234h1v3h-1zM560 234h1v3h-1zM565 234h1v3h-1zM570 234h1v3h-1zM575 234h1v3h-1zM580 234h1v3h-1zM585 234h1v3h-1zM590 234h1v3h-1zM595 234h1v3h-1zM600 234h1v3h-1zM605 234h1v3h-1zM610 234h1v3h-1zM615 234h1v3h-1zM620 234h1v3h-1zM625 234h1v3h-1zM630 234h1v3h-1zM635 234h1v3h-1zM640 234h1v3h-1zM645 234h1v3h-1zM650 234h1v3h-1zM655 234h1v3h-1zM660 234h1v3h-1zM665 234h1v3h-1zM670 234h1v3h-1zM675 234h1v3h-1zM680 234h1v3h-1zM685 234h1v3h-1zM690 234h1v3h-1zM695 234h1v3h-1zM700 234h1v3h-1zM705 234h1v3h-1zM710 234h1v3h-1zM715 234h1v3h-1zM720 234h1v3h-1zM725 234h1v3h-1zM379 45h3v1h-3zM379 55h3v1h-3zM379 65h3v1h-3zM379 75h3v1h-3zM379 85h3v1h-3zM379 95h3v1h-3zM379 105h3v1h-3zM379 115h3v1h-3zM379 125h3v1h-3zM379 135h3v1h-3zM379 145h3v1h-3zM379 155h3v1h-3zM379 165h3v1h-3zM379 175h3v1h-3zM379 185h3v1h-3zM379 195h3v1h-3zM379 205h3v1h-3zM379 215h3v1h-3zM379 225h3v1h-3zM379 235h3v1h-3zM379 245h3v1h-3zM379 255h3v1h-3zM379 265h3v1h-3zM379 275h3v1h-3zM379 285h3v1h-3zM379 295h3v1h-3zM379 305h3v1h-3zM379 315h3v1h-3zM379 325h3v1h-3zM379 335h3v1h-3zM379 345h3v1h-3zM379 355h3v1h-3zM379 365h3v1h-3zM379 375h3v1h-3zM379 385h3v1h-3zM379 395h3v1h-3zM379 405h3v1h-3zM379 415h3v1h-3zM379 425h3v1h-3z"/>
<path fill="#00f0ff" d="M30 221h1v3h-1zM31 223h1v3h-1zM32 225h1v1h-1zM33 225h1v1h-1zM34 225h1v1h-1zM35 225h1v1h-1zM36 225h1v1h-1zM37 225h1v1h-1zM38 225h1v3h-1zM39 225h1v3h-1zM40 227h1v3h-1zM41 227h1v3h-1zM42 229h1v1h-1zM43 229h1v1h-1zM44 229h1v3h-1zM45 231h1v1h-1zM46 231h1v3h-1zM47 233h1v1h-1zM48 233h1v1h-1zM49 231h1v3h-1zM50 233h1v1h-1zM51 233h1v1h-1zM52 231h1v3h-1zM53 229h1v3h-1zM54 229h1v1h-1zM55 229h1v1h-1zM56 229h1v3h-1zM57 229h1v1h-1zM58 229h1v3h-1zM59 231h1v1h-1zM60 231h1v1h-1zM61 231h1v1h-1zM62 231h1v3h-1zM63 231h1v3h-1zM64 231h1v1h-1zM65 231h1v1h-1zM66 231h1v1h-1zM67 231h1v1h-1zM68 231h1v1h-1zM69 229h1v3h-1zM70 229h1v1h-1zM71 229h1v1h-1zM72 229h1v1h-1zM73 229h1v1h-1zM74 229h1v1h-1zM75 229h1v1h-1zM76 229h1v1h-1zM77 229h1v1h-1zM78 229h1v1h-1zM79 229h1v1h-1zM80 229h1v1h-1zM81 229h1v1h-1zM82 229h1v1h-1zM83 229h1v1h-1zM84 229h1v1h-1zM85 227h1v3h-1zM86 221h1v7h-1zM87 215h1v7h-1zM88 207h1v9h-1zM89 199h1v9h-1zM90 189h1v11h-1zM91 177h1v13h-1zM92 165h1v13h-1zM93 153h1v13h-1zM94 143h1v11h-1zM95 133h1v11h-1zM96 125h1v9h-1zM97 113h1v13h-1zM98 105h1v9h-1zM99 97h1v9h-1zM100 91h1v7h-1zM101 85h1v7h-1zM102 81h1v5h-1zM103 77h1v5h-1zM104 73h1v5h-1zM105 71h1v3h-1zM106 71h1v1h-1zM107 69h1v3h-1zM108 69h1v1h-1zM109 69h1v1h-1zM110 69h1v1h-1zM111 67h1v3h-1zM112 69h1v1h-1zM113 67h1v3h-1zM114 67h1v3h-1zM115 67h1v3h-1zM116 65h1v3h-1zM117 65h1v1h-1zM118 65h1v1h-1zM119 65h1v1h-1zM120 63h1v3h-1zM121 61h1v3h-1zM122 63h1v1h-1zM123 61h1v3h-1zM124 61h1v3h-1zM125 61h1v3h-1zM126 63h1v1h-1zM127 61h1v3h-1zM128 61h1v3h-1zM129 63h1v1h-1zM130 63h1v1h-1zM131 63h1v1h-1zM132 63h1v1h-1zM133 61h1v3h-1zM134 63h1v1h-1zM135 61h1v3h-1zM136 61h1v1h-1zM137 61h1v1h-1zM138 61h1v1h-1zM139 61h1v1h-1zM140 61h1v1h-1zM141 61h1v1h-1zM142 61h1v3h-1zM143 61h1v1h-1zM144 61h1v3h-1zM145 63h1v1h-1zM146 63h1v3h-1zM147 63h1v1h-1zM148 63h1v3h-1zM149 65h1v1h-1zM150 65h1v1h-1zM151 63h1v3h-1zM152 63h1v3h-1zM153 63h1v1h-1zM154 63h1v1h-1zM155 63h1v1h-1zM156 63h1v5h-1zM157 67h1v7h-1zM158 73h1v9h-1zM159 81h1v9h-1zM160 89h1v13h-1zM161 101h1v11h-1zM162 111h1v11h-1zM163 121h1v13h-1zM164 133h1v13h-1zM165 145h1v11h-1zM166 155h1v13h-1zM167 167h1v11h-1zM168 177h1v9h-1zM169 185h1v9h-1zM170 193h1v9h-1zM171 201h1v7h-1zM172 207h1v7h-1zM173 213h1v5h-1zM174 217h1v5h-1zM175 221h1v3h-1zM176 223h1v3h-1zM177 225h1v1h-1zM178 225h1v3h-1zM179 227h1v1h-1zM180 227h1v3h-1zM181 227h1v3h-1zM182 229h1v1h-1zM183 229h1v1h-1zM184 229h1v1h-1zM185 229h1v1h-1zM186 229h1v1h-1zM187 229h1v1h-1zM188 229h1v3h-1zM189 229h1v3h-1zM190 231h1v1h-1zM191 229h1v3h-1zM192 231h1v1h-1zM193 229h1v3h-1zM194 231h1v1h-1zM195 229h1v3h-1zM196 231h1v1h-1zM197 231h1v1h-1zM198 231h1v1h-1zM199 231h1v1h-1zM200 231h1v3h-1zM201 233h1v1h-1zM202 233h1v1h-1zM203 233h1v1h-1zM204 233h1v1h-1zM205 233h1v1h-1zM206 233h1v3h-1zM207 233h1v1h-1zM208 233h1v1h-1zM209 233h1v1h-1zM210 231h1v3h-1zM211 231h1v1h-1zM212 231h1v1h-1zM213 229h1v3h-1zM214 229h1v1h-1zM215 229h1v1h-1zM216 227h1v3h-1zM217 227h1v1h-1zM218 227h1v3h-1zM219 229h1v1h-1zM220 229h1v1h-1zM221 227h1v3h-1zM222 227h1v3h-1zM223 227h1v3h-1zM224 229h1v1h-1zM225 227h1v3h-1zM226 227h1v1h-1zM227 223h1v5h-1zM228 217h1v7h-1zM229 209h1v9h-1zM230 201h1v9h-1zM231 191h1v11h-1zM232 179h1v13h-1zM233 169h1v11h-1zM234 157h1v13h-1zM235 147h1v11h-1zM236 135h1v13h-1zM237 125h1v11h-1zM238 117h1v9h-1zM239 109h1v9h-1zM240 101h1v9h-1zM241 93h1v9h-1zM242 87h1v7h-1zM243 81h1v7h-1zM244 77h1v5h-1zM245 75h1v3h-1zM246 73h1v3h-1zM247 69h1v5h-1zM248 69h1v1h-1zM249 69h1v1h-1zM250 69h1v1h-1zM251 69h1v1h-1zM252 69h1v1h-1zM253 67h1v3h-1zM254 69h1v1h-1zM255 67h1v3h-1zM256 67h1v1h-1zM257 65h1v3h-1zM258 65h1v1h-1zM259 63h1v3h-1zM260 63h1v1h-1zM261 63h1v1h-1zM262 63h1v1h-1zM263 61h1v3h-1zM264 61h1v3h-1zM265 61h1v1h-1zM266 61h1v1h-1zM267 61h1v1h-1zM268 61h1v1h-1zM269 61h1v3h-1zM270 61h1v3h-1zM271 61h1v3h-1zM272 63h1v1h-1zM273 61h1v3h-1zM274 61h1v3h-1zM275 61h1v3h-1zM276 61h1v3h-1zM277 61h1v1h-1zM278 61h1v1h-1zM279 61h1v1h-1zM280 61h1v1h-1zM281 61h1v1h-1zM282 59h1v3h-1zM283 59h1v1h-1zM284 59h1v1h-1zM285 59h1v1h-1zM286 59h1v1h-1zM287 59h1v1h-1zM288 59h1v1h-1zM289 59h1v3h-1zM290 61h1v3h-1zM291 63h1v1h-1zM292 63h1v1h-1zM293 63h1v1h-1zM294 63h1v1h-1zM295 63h1v1h-1zM296 63h1v5h-1zM297 67h1v5h-1zM298 71h1v7h-1zM299 77h1v7h-1zM300 83h1v9h-1zM301 91h1v13h-1zM302 103h1v13h-1zM303 115h1v11h-1zM304 125h1v13h-1zM305 137h1v13h-1zM306 149h1v11h-1zM307 159h1v11h-1zM308 169h1v9h-1zM309 177h1v9h-1zM310 185h1v9h-1zM311 193h1v9h-1zM312 201h1v7h-1zM313 207h1v5h-1zM314 211h1v5h-1zM315 215h1v5h-1zM316 219h1v5h-1zM317 223h1v3h-1zM318 225h1v1h-1zM319 225h1v1h-1zM320 225h1v1h-1zM321 225h1v1h-1zM322 225h1v1h-1zM323 223h1v3h-1zM324 225h1v1h-1zM325 225h1v1h-1zM326 225h1v3h-1zM327 227h1v1h-1zM328 227h1v3h-1zM329 229h1v3h-1zM330 231h1v5h-1zM331 231h1v1h-1zM332 231h1v3h-1zM333 233h1v1h-1zM334 233h1v1h-1zM335 233h1v1h-1zM336 233h1v1h-1zM337 233h1v1h-1zM338 233h1v1h-1zM339 231h1v3h-1zM340 233h1v1h-1zM341 233h1v1h-1zM342 233h1v1h-1zM343 233h1v1h-1zM344 233h1v1h-1zM345 233h1v3h-1zM346 233h1v3h-1zM347 233h1v3h-1zM348 235h1v1h-1zM349 233h1v3h-1zM350 233h1v3h-1zM351 233h1v3h-1zM352 233h1v1h-1zM353 233h1v1h-1zM354 233h1v1h-1zM355 231h1v3h-1zM356 231h1v1h-1zM357 231h1v1h-1zM358 231h1v1h-1zM359 229h1v3h-1zM360 231h1v1h-1zM361 231h1v1h-1zM362 231h1v1h-1zM363 231h1v1h-1zM364 231h1v1h-1zM365 231h1v1h-1zM366 231h1v1h-1zM367 229h1v3h-1zM368 229h1v3h-1zM369 229h1v3h-1zM370 227h1v3h-1zM371 225h1v3h-1zM372 219h1v7h-1zM373 213h1v7h-1zM374 205h1v9h-1zM375 195h1v11h-1zM376 183h1v13h-1zM377 171h1v13h-1zM378 161h1v11h-1zM379 151h1v11h-1zM380 139h1v13h-1zM381 129h1v11h-1zM382 121h1v9h-1zM383 113h1v9h-1zM384 105h1v9h-1zM385 97h1v9h-1zM386 91h1v7h-1zM387 85h1v7h-1zM388 79h1v7h-1zM389 75h1v5h-1zM390 73h1v3h-1zM391 71h1v3h-1zM392 69h1v3h-1zM393 69h1v1h-1zM394 69h1v1h-1zM395 69h1v1h-1zM396 69h1v1h-1zM397 69h1v1h-1zM398 69h1v1h-1zM399 67h1v3h-1zM400 67h1v1h-1zM401 65h1v3h-1zM402 65h1v1h-1zM403 65h1v1h-1zM404 65h1v1h-1zM405 63h1v3h-1zM406 63h1v1h-1zM407 61h1v3h-1zM408 61h1v1h-1zM409 61h1v1h-1zM410 61h1v1h-1zM411 61h1v1h-1zM412 61h1v3h-1zM413 61h1v3h-1zM414 61h1v3h-1zM415 61h1v3h-1zM416 61h1v3h-1zM417 61h1v3h-1zM418 63h1v1h-1zM419 61h1v3h-1zM420 61h1v1h-1zM421 61h1v1h-1zM422 61h1v1h-1zM423 61h1v1h-1zM424 61h1v1h-1zM425 61h1v1h-1zM426 61h1v1h-1zM427 61h1v1h-1zM428 61h1v1h-1zM429 61h1v1h-1zM430 61h1v3h-1zM431 63h1v1h-1zM432 63h1v1h-1zM433 63h1v1h-1zM434 63h1v1h-1zM435 63h1v1h-1zM436 63h1v1h-1zM437 61h1v3h-1zM438 61h1v3h-1zM439 63h1v1h-1zM440 63h1v1h-1zM441 63h1v3h-1zM442 65h1v7h-1zM443 71h1v7h-1zM444 77h1v9h-1zM445 85h1v9h-1zM446 93h1v13h-1zM447 105h1v11h-1zM448 115h1v13h-1zM449 127h1v13h-1zM450 139h1v11h-1zM451 149h1v11h-1zM452 159h1v11h-1zM453 169h1v11h-1zM454 179h1v9h-1zM455 187h1v9h-1zM456 195h1v9h-1zM457 203h1v7h-1zM458 209h1v7h-1zM459 215h1v5h-1zM460 219h1v3h-1zM461 221h1v3h-1zM462 223h1v3h-1zM463 225h1v1h-1zM464 225h1v3h-1zM465 227h1v1h-1zM466 227h1v1h-1zM467 227h1v1h-1zM468 227h1v1h-1zM469 227h1v3h-1zM470 229h1v1h-1zM471 227h1v3h-1zM472 229h1v3h-1zM473 229h1v3h-1zM474 231h1v1h-1zM475 231h1v1h-1zM476 231h1v1h-1zM477 231h1v1h-1zM478 231h1v1h-1zM479 231h1v1h-1zM480 231h1v1h-1zM481 229h1v3h-1zM482 229h1v3h-1zM483 231h1v1h-1zM484 231h1v1h-1zM485 231h1v1h-1zM486 231h1v1h-1zM487 229h1v3h-1zM488 231h1v1h-1zM489 231h1v3h-1zM490 233h1v1h-1zM491 233h1v1h-1zM492 233h1v1h-1zM493 233h1v1h-1zM494 233h1v1h-1zM495 233h1v1h-1zM496 233h1v1h-1zM497 231h1v3h-1zM498 231h1v1h-1zM499 231h1v1h-1zM500 231h1v1h-1zM501 229h1v3h-1zM502 229h1v3h-1zM503 229h1v1h-1zM504 229h1v1h-1zM505 229h1v1h-1zM506 229h1v1h-1zM507 229h1v1h-1zM508 229h1v1h-1zM509 229h1v1h-1zM510 229h1v3h-1zM511 229h1v1h-1zM512 227h1v3h-1zM513 223h1v5h-1zM514 217h1v7h-1zM515 209h1v9h-1zM516 199h1v11h-1zM517 189h1v11h-1zM518 177h1v13h-1zM519 165h1v13h-1zM520 153h1v13h-1zM521 141h1v13h-1zM522 131h1v11h-1zM523 121h1v11h-1zM524 113h1v9h-1zM525 103h1v11h-1zM526 97h1v7h-1zM527 89h1v9h-1zM528 83h1v7h-1zM529 77h1v7h-1zM530 75h1v3h-1zM531 71h1v5h-1zM532 69h1v3h-1zM533 67h1v3h-1zM534 67h1v3h-1zM535 67h1v1h-1zM536 67h1v1h-1zM537 67h1v1h-1zM538 67h1v1h-1zM539 65h1v3h-1zM540 65h1v1h-1zM541 65h1v1h-1zM542 65h1v1h-1zM543 63h1v3h-1zM544 63h1v1h-1zM545 61h1v3h-1zM546 61h1v1h-1zM547 59h1v3h-1zM548 59h1v1h-1zM549 59h1v1h-1zM550 59h1v1h-1zM551 59h1v1h-1zM552 59h1v1h-1zM553 59h1v1h-1zM554 59h1v1h-1zM555 59h1v1h-1zM556 59h1v3h-1zM557 59h1v3h-1zM558 61h1v1h-1zM559 61h1v1h-1zM560 59h1v3h-1zM561 59h1v1h-1zM562 59h1v3h-1zM563 59h1v1h-1zM564 59h1v1h-1zM565 57h1v3h-1zM566 59h1v1h-1zM567 57h1v3h-1zM568 57h1v3h-1zM569 57h1v1h-1zM570 57h1v3h-1zM571 57h1v1h-1zM572 57h1v3h-1zM573 59h1v1h-1zM574 59h1v1h-1zM575 59h1v1h-1zM576 59h1v1h-1zM577 59h1v1h-1zM578 59h1v3h-1zM579 61h1v1h-1zM580 59h1v3h-1zM581 59h1v1h-1zM582 59h1v5h-1zM583 63h1v3h-1zM584 65h1v9h-1zM585 73h1v7h-1zM586 79h1v11h-1zM587 89h1v11h-1zM588 99h1v13h-1zM589 111h1v13h-1zM590 123h1v13h-1zM591 135h1v13h-1zM592 147h1v11h-1zM593 157h1v11h-1zM594 167h1v11h-1zM595 177h1v9h-1zM596 185h1v9h-1zM597 193h1v9h-1zM598 201h1v7h-1zM599 207h1v7h-1zM600 213h1v5h-1zM601 217h1v5h-1zM602 221h1v5h-1zM603 225h1v1h-1zM604 225h1v3h-1zM605 225h1v3h-1zM606 225h1v1h-1zM607 225h1v1h-1zM608 225h1v1h-1zM609 225h1v1h-1zM610 225h1v3h-1zM611 225h1v3h-1zM612 227h1v3h-1zM613 227h1v3h-1zM614 229h1v3h-1zM615 229h1v3h-1zM616 231h1v1h-1zM617 231h1v1h-1zM618 231h1v1h-1zM619 231h1v3h-1zM620 231h1v3h-1zM621 231h1v3h-1zM622 233h1v1h-1zM623 231h1v3h-1zM624 231h1v3h-1zM625 233h1v1h-1zM626 233h1v1h-1zM627 233h1v1h-1zM628 233h1v3h-1zM629 233h1v3h-1zM630 233h1v1h-1zM631 233h1v1h-1zM632 233h1v1h-1zM633 233h1v1h-1zM634 233h1v3h-1zM635 233h1v1h-1zM636 233h1v3h-1zM637 233h1v1h-1zM638 233h1v1h-1zM639 231h1v3h-1zM640 231h1v3h-1zM641 231h1v3h-1zM642 231h1v1h-1zM643 229h1v3h-1zM644 231h1v1h-1zM645 229h1v3h-1zM646 231h1v1h-1zM647 229h1v3h-1zM648 231h1v1h-1zM649 231h1v1h-1zM650 231h1v1h-1zM651 231h1v1h-1zM652 231h1v1h-1zM653 229h1v3h-1zM654 229h1v3h-1zM655 229h1v3h-1zM656 227h1v3h-1zM657 223h1v5h-1zM658 217h1v7h-1zM659 209h1v9h-1zM660 201h1v9h-1zM661 189h1v13h-1zM662 179h1v11h-1zM663 167h1v13h-1zM664 157h1v11h-1zM665 147h1v11h-1zM666 139h1v9h-1zM667 129h1v11h-1zM668 121h1v9h-1zM669 113h1v9h-1zM670 105h1v9h-1zM671 97h1v9h-1zM672 91h1v7h-1zM673 85h1v7h-1zM674 81h1v5h-1zM675 77h1v5h-1zM676 73h1v5h-1zM677 71h1v3h-1zM678 71h1v1h-1zM679 69h1v3h-1zM680 69h1v1h-1zM681 69h1v1h-1zM682 69h1v1h-1zM683 69h1v1h-1zM684 69h1v1h-1zM685 69h1v1h-1zM686 67h1v3h-1zM687 67h1v1h-1zM688 65h1v3h-1zM689 65h1v1h-1zM690 65h1v1h-1zM691 65h1v1h-1zM692 63h1v3h-1zM693 63h1v1h-1zM694 63h1v1h-1zM695 63h1v1h-1zM696 63h1v1h-1zM697 63h1v1h-1zM698 63h1v1h-1zM699 63h1v1h-1zM700 63h1v3h-1zM701 63h1v1h-1zM702 63h1v1h-1zM703 63h1v1h-1zM704 63h1v1h-1zM705 63h1v1h-1zM706 63h1v1h-1zM707 63h1v1h-1zM708 63h1v1h-1zM709 63h1v1h-1zM710 63h1v1h-1zM711 63h1v1h-1zM712 63h1v1h-1zM713 63h1v1h-1zM714 63h1v1h-1zM715 63h1v1h-1zM716 63h1v1h-1zM717 63h1v1h-1zM718 63h1v3h-1zM719 65h1v1h-1zM720 63h1v3h-1zM721 65h1v1h-1zM722 63h1v3h-1zM723 65h1v1h-1zM724 63h1v3h-1zM725 63h1v3h-1zM726 65h1v1h-1zM727 65h1v5h-1zM728 69h1v7h-1zM729 75h1v5h-1z"/>
<path fill="#e80090" d="M720 159h9v1h-9zM722 158h2v3h-2zM724 157h1v5h-1zM725 156h1v7h-1z"/>
<path fill="#00ff00" d="M375 36h11v11h-2v1h-2v1h-1v1h-1v-1h-1v-1h-2v-1h-2z"/>
<path fill="#00ffff" d="M11 233h12l1 1 3 5v1l-3 5-1 1h-12z"/>
<path fill="#ffffff" d="M696 462h4v1h-4zM694 463h6v1h-6zM690 464h5v1h-5zM700 464h4v1h-4zM690 465h16v1h-16zM690 466h15v1h-15zM691 467h3v1h-3zM696 467h1v1h-1zM702 467h1v1h-1zM696 468h7v1h-7zM698 469h5v1h-5z"/>
</g>
<path d="M769.5 48.5L800.5 38.5V193.5L769.5 133.5z" fill="#424142" stroke="#b0b0b0" stroke-width="1"/>
<path d="M526 19.5H531.5L535.5 9.5H540" fill="none" stroke="#00ffff" stroke-width="1"/>
<text transform="matrix(0.730 0 0 1 0 0)" x="84.31 96.90 107.56 119.99" y="18" font-size="16" fill="#00ff00" stroke="#ff0000" stroke-width="0.22">STOP</text>
<text transform="matrix(0.654 0 0 1 0 0)" x="182.19" y="20" font-size="16" fill="#00ffff" stroke="#848284" stroke-width="0.1">M</text>
<text transform="matrix(0.894 0 0 1 0 0)" x="148.52 158.52 168.59 178.08 188.11" y="20" font-size="16" fill="#00ffff" stroke="#000" stroke-width="0.22">100ns</text>
<text transform="matrix(0.739 0 0 1 0 0)" x="424.93" y="20" font-size="16" fill="#00ffff" stroke="#848284" stroke-width="0.1">D</text>
<text transform="matrix(0.860 0 0 1 0 0)" x="382.87 391.78 396.82 406.70 416.00 425.07 435.98" y="20" font-size="16" fill="#00ffff" stroke="#000" stroke-width="0.22">0.000µs</text>
<text transform="matrix(0.773 0 0 1 0 0)" x="581.82" y="20" font-size="16" fill="#00ffff" stroke="#848284" stroke-width="0.1">T</text>
<text transform="matrix(0.686 0 0 1 0 0)" x="675.87 689.08 700.03 712.35 724.18 736.52 749.44" y="20" font-size="16" fill="#00ffff" stroke="#000" stroke-width="0.22">CH1 EDC</text>
<text transform="matrix(0.783 0 0 1 0 0)" x="698.53 709.59 715.93 726.84 735.85" y="20" font-size="16" fill="#00ffff" stroke="#000" stroke-width="0.22">1.60V</text>
<text transform="matrix(0.895 0 0 1 0 0)" x="767.68" y="19" font-size="16" fill="#00ffff" stroke="#848284" stroke-width="0.1">F</text>
<text transform="matrix(0.775 0 0 1 0 0)" x="905.23 915.45 920.76 931.11 941.74 951.70 962.08 971.40 982.93 994.78" y="20" font-size="16" fill="#00ffff" stroke="#000" stroke-width="0.22">2.36756MHz</text>
<text transform="matrix(0.718 0 0 1 0 0)" x="25.23 37.51 47.64" y="470" font-size="16" fill="#00ffff" stroke="#848284" stroke-width="0.1">CH1</text>
<text transform="matrix(0.738 0 0 1 0 0)" x="94.28 105.87 111.78 123.30 133.60 146.39 155.59 168.30" y="471" font-size="16" fill="#00ffff" stroke="#424142" stroke-width="0.22">1.00V DC</text>
<text transform="matrix(0.895 0 0 1 0 0)" x="158.36 168.03" y="471" font-size="13" fill="#00ffff" stroke="#424142" stroke-width="0.2">B<tspan font-size="10.5" dy="2">w</tspan></text>
<text transform="matrix(0.757 0 0 1 0 0)" x="287.93 299.66 311.54" y="470" font-size="16" fill="#00ffff" stroke="#848284" stroke-width="0.1">CH2</text>
<text transform="matrix(0.756 0 0 1 0 0)" x="402.24 414.41 425.94" y="471" font-size="16" fill="#ffff00" stroke="#424142" stroke-width="0.22">OFF</text>
<text transform="matrix(0.935 0 0 1 0 0)" x="705.44 715.13 724.22 732.92" y="448" font-size="15.3" fill="#60ff60" stroke="#000" stroke-width="0.08" style="font-family:'Liberation Mono',monospace">Auto</text>
<text transform="translate(788,0) rotate(-90) matrix(0.712 0 0 1 0 0)" x="-168.55 -156.66 -144.61 -140.19 -127.55 -115.23 -103.70" y="0" font-size="16" fill="#00ffff" stroke="#424142" stroke-width="0.12">TRIGGER</text>
<text x="380.5" y="45" font-size="8.7" font-weight="bold" text-anchor="middle" fill="#000">T</text>
<text x="17.5" y="244" font-size="13.5" text-anchor="middle" fill="#000" style="font-family:'Liberation Serif',serif">1</text>
</svg></body></html>
